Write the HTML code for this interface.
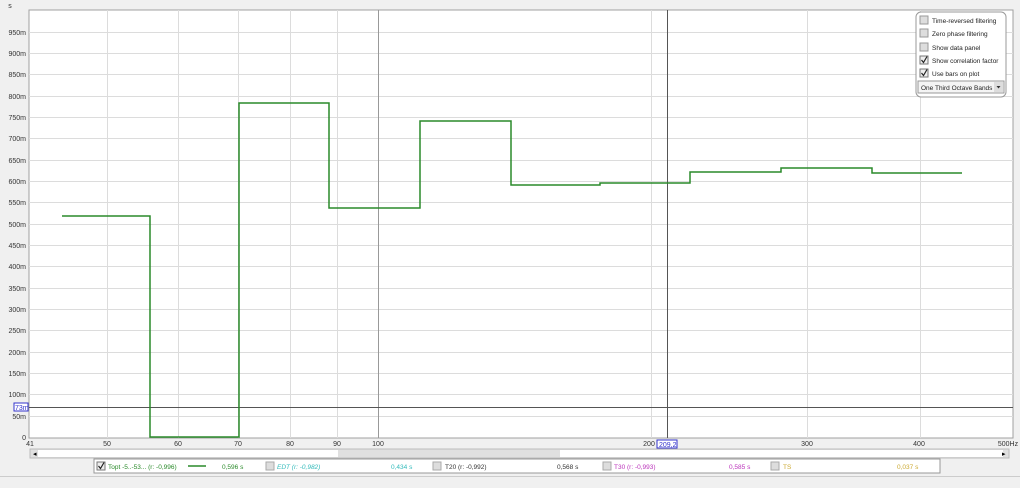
<!DOCTYPE html>
<html><head><meta charset="utf-8"><style>
body{margin:0;width:1020px;height:483px;background:#f0f0f0;font-family:"Liberation Sans",sans-serif;overflow:hidden}
</style></head><body>
<svg width="1020" height="483" xmlns="http://www.w3.org/2000/svg" font-family="Liberation Sans, sans-serif" font-size="7">
<rect x="0" y="0" width="1020" height="483" fill="#f0f0f0"/>
<rect x="29" y="10" width="984" height="428" fill="#fff" stroke="#a0a0a0"/>
<g stroke="#dcdcdc" stroke-width="1">
<line x1="29" x2="1013" y1="416.5" y2="416.5"/><line x1="29" x2="1013" y1="394.5" y2="394.5"/><line x1="29" x2="1013" y1="373.5" y2="373.5"/><line x1="29" x2="1013" y1="352.5" y2="352.5"/><line x1="29" x2="1013" y1="330.5" y2="330.5"/><line x1="29" x2="1013" y1="309.5" y2="309.5"/><line x1="29" x2="1013" y1="288.5" y2="288.5"/><line x1="29" x2="1013" y1="266.5" y2="266.5"/><line x1="29" x2="1013" y1="245.5" y2="245.5"/><line x1="29" x2="1013" y1="224.5" y2="224.5"/><line x1="29" x2="1013" y1="202.5" y2="202.5"/><line x1="29" x2="1013" y1="181.5" y2="181.5"/><line x1="29" x2="1013" y1="160.5" y2="160.5"/><line x1="29" x2="1013" y1="138.5" y2="138.5"/><line x1="29" x2="1013" y1="117.5" y2="117.5"/><line x1="29" x2="1013" y1="96.5" y2="96.5"/><line x1="29" x2="1013" y1="74.5" y2="74.5"/><line x1="29" x2="1013" y1="53.5" y2="53.5"/><line x1="29" x2="1013" y1="32.5" y2="32.5"/>
<line y1="10" y2="438" x1="107.5" x2="107.5"/><line y1="10" y2="438" x1="178.5" x2="178.5"/><line y1="10" y2="438" x1="238.5" x2="238.5"/><line y1="10" y2="438" x1="290.5" x2="290.5"/><line y1="10" y2="438" x1="337.5" x2="337.5"/><line y1="10" y2="438" x1="651.5" x2="651.5"/><line y1="10" y2="438" x1="807.5" x2="807.5"/><line y1="10" y2="438" x1="920.5" x2="920.5"/>
</g>
<line y1="10" y2="438" x1="378.5" x2="378.5" stroke="#999"/>
<line x1="29" x2="1013" y1="407.5" y2="407.5" stroke="#555"/>
<line y1="10" y2="438" x1="667.5" x2="667.5" stroke="#555"/>
<polyline fill="none" stroke="#2a8a2a" stroke-width="1.5" points="62,216 150,216 150,437 239,437 239,103 329,103 329,208 420,208 420,121 511,121 511,185 600,185 600,183 690,183 690,172 781,172 781,168 872,168 872,173 962,173"/>
<g fill="#333" text-anchor="end">
<text x="10" y="8" text-anchor="middle">s</text>
<text x="26" y="35">950m</text><text x="26" y="56">900m</text><text x="26" y="77">850m</text><text x="26" y="99">800m</text><text x="26" y="120">750m</text><text x="26" y="141">700m</text><text x="26" y="163">650m</text><text x="26" y="184">600m</text><text x="26" y="205">550m</text><text x="26" y="227">500m</text><text x="26" y="248">450m</text><text x="26" y="269">400m</text><text x="26" y="291">350m</text><text x="26" y="312">300m</text><text x="26" y="333">250m</text><text x="26" y="355">200m</text><text x="26" y="376">150m</text><text x="26" y="397">100m</text><text x="26" y="419">50m</text><text x="26" y="440">0</text>
</g>
<rect x="14" y="403" width="14" height="8" fill="#fff" stroke="#33c"/><text x="15" y="410" fill="#33c">73m</text>
<g fill="#333" text-anchor="middle">
<text x="30" y="446">41</text><text x="107" y="446">50</text><text x="178" y="446">60</text><text x="238" y="446">70</text><text x="290" y="446">80</text><text x="337" y="446">90</text><text x="378" y="446">100</text><text x="649" y="446">200</text><text x="807" y="446">300</text><text x="919" y="446">400</text><text x="1008" y="446">500Hz</text>
</g>
<rect x="657" y="440" width="20" height="8" fill="#fff" stroke="#33c"/><text x="659" y="447" fill="#33c">209,2</text>
<rect x="30" y="449" width="979" height="9" fill="#e0e0e0" stroke="#bbb"/>
<rect x="38" y="450" width="300" height="7" fill="#fff"/><rect x="560" y="450" width="443" height="7" fill="#fff"/>
<text x="33" y="456">◂</text><text x="1002" y="456">▸</text>
<rect x="94" y="459" width="846" height="14" fill="#fff" stroke="#999"/>
<g font-size="6.5">
<rect x="97" y="462" width="8" height="8" fill="#eee" stroke="#777"/><path d="M98.5 466 L100.5 468.5 L104 462.5" fill="none" stroke="#222" stroke-width="1.2"/>
<text x="108" y="469" fill="#2a8a2a">Topt -5..-53... (r: -0,996)</text>
<line x1="188" x2="206" y1="466" y2="466" stroke="#2a8a2a" stroke-width="1.5"/>
<text x="222" y="469" fill="#2a8a2a">0,596 s</text>
<rect x="266" y="462" width="8" height="8" fill="#ddd" stroke="#aaa"/><text x="277" y="469" fill="#3bb" font-style="italic">EDT (r: -0,982)</text>
<text x="391" y="469" fill="#3bb">0,434 s</text>
<rect x="433" y="462" width="8" height="8" fill="#ddd" stroke="#aaa"/><text x="445" y="469" fill="#333">T20 (r: -0,992)</text>
<text x="557" y="469" fill="#333">0,568 s</text>
<rect x="603" y="462" width="8" height="8" fill="#ddd" stroke="#aaa"/><text x="614" y="469" fill="#b3b">T30 (r: -0,993)</text>
<text x="729" y="469" fill="#b3b">0,585 s</text>
<rect x="771" y="462" width="8" height="8" fill="#ddd" stroke="#aaa"/><text x="783" y="469" fill="#ca3">TS</text>
<text x="897" y="469" fill="#ca3">0,037 s</text>
</g>
<line x1="0" x2="1020" y1="476.5" y2="476.5" stroke="#ccc"/>
<rect x="916" y="12" width="90" height="85" rx="5" fill="#fff" stroke="#999"/>
<g font-size="6.5" fill="#222">
<rect x="920" y="16" width="8" height="8" fill="#ddd" stroke="#999"/><text x="932" y="23">Time-reversed filtering</text>
<rect x="920" y="29" width="8" height="8" fill="#ddd" stroke="#999"/><text x="932" y="36">Zero phase filtering</text>
<rect x="920" y="43" width="8" height="8" fill="#ddd" stroke="#999"/><text x="932" y="50">Show data panel</text>
<rect x="920" y="56" width="8" height="8" fill="#eee" stroke="#777"/><path d="M921.5 60 L923.5 62.5 L927 56.5" fill="none" stroke="#222" stroke-width="1.2"/><text x="932" y="63">Show correlation factor</text>
<rect x="920" y="69" width="8" height="8" fill="#eee" stroke="#777"/><path d="M921.5 73 L923.5 75.5 L927 69.5" fill="none" stroke="#222" stroke-width="1.2"/><text x="932" y="76">Use bars on plot</text>
<rect x="918" y="81" width="86" height="12" fill="#f4f4f4" stroke="#999"/><text x="921" y="90">One Third Octave Bands</text>
<rect x="994" y="82" width="9" height="10" fill="#ddd"/><path d="M996.5 86 L1000.5 86 L998.5 88.5Z" fill="#333"/>
</g>
</svg>
</body></html>
